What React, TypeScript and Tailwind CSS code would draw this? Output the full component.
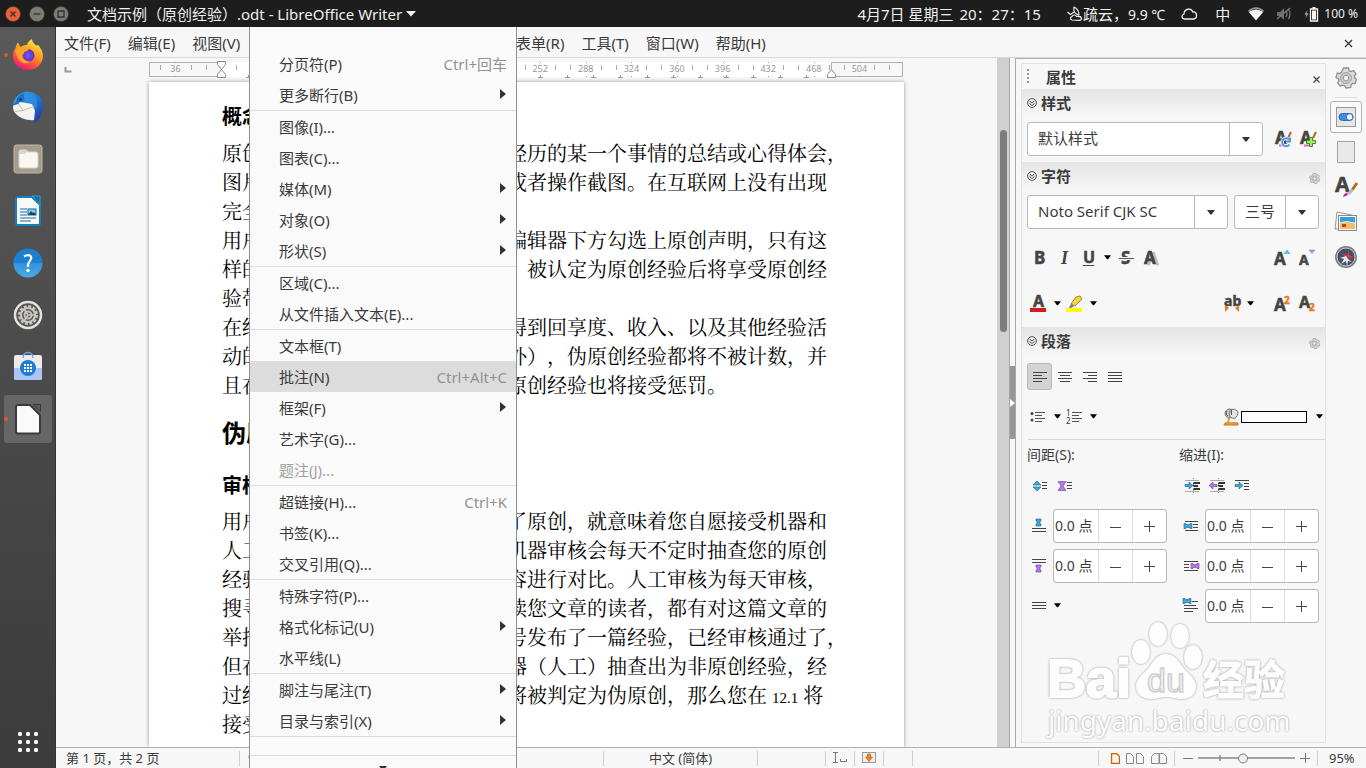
import React from 'react';
import clsx from 'clsx';

const MENUS = ['文件(F)', '编辑(E)', '视图(V)', '插入(I)', '格式(O)', '样式(Y)', '表格(A)', '表单(R)', '工具(T)', '窗口(W)', '帮助(H)'];

interface MenuEntry {
  label: string;
  shortcut?: string;
  submenu?: boolean;
  active?: boolean;
  disabled?: boolean;
}

const INSERT_MENU: MenuEntry[][] = [
  [{ label: '分页符(P)', shortcut: 'Ctrl+回车' }, { label: '更多断行(B)', submenu: true }],
  [
    { label: '图像(I)…' },
    { label: '图表(C)...' },
    { label: '媒体(M)', submenu: true },
    { label: '对象(O)', submenu: true },
    { label: '形状(S)', submenu: true },
  ],
  [{ label: '区域(C)...' }, { label: '从文件插入文本(E)...' }],
  [
    { label: '文本框(T)' },
    { label: '批注(N)', shortcut: 'Ctrl+Alt+C', active: true },
    { label: '框架(F)', submenu: true },
    { label: '艺术字(G)...' },
    { label: '题注(J)...', disabled: true },
  ],
  [{ label: '超链接(H)...', shortcut: 'Ctrl+K' }, { label: '书签(K)...' }, { label: '交叉引用(Q)...' }],
  [{ label: '特殊字符(P)...' }, { label: '格式化标记(U)', submenu: true }, { label: '水平线(L)' }],
  [{ label: '脚注与尾注(T)', submenu: true }, { label: '目录与索引(X)', submenu: true }],
];

interface Line {
  start: string;
  rest?: React.ReactNode;
}

// each line: its start, then what follows the open menu
const FIRST_LINES: Line[] = [
  { start: '原创', rest: '经历的某一个事情的总结或心得体会，' },
  { start: '图片', rest: '或者操作截图。在互联网上没有出现' },
  { start: '完全' },
  { start: '用户', rest: '编辑器下方勾选上原创声明，只有这' },
  { start: '样的', rest: '，被认定为原创经验后将享受原创经' },
  { start: '验带' },
  { start: '在经', rest: '得到回享度、收入、以及其他经验活' },
  { start: '动的', rest: '外），伪原创经验都将不被计数，并' },
  { start: '且在', rest: '原创经验也将接受惩罚。' },
];

const REVIEW_LINES: Line[] = [
  { start: '用户', rest: '了原创，就意味着您自愿接受机器和' },
  { start: '人工', rest: '机器审核会每天不定时抽查您的原创' },
  { start: '经验', rest: '容进行对比。人工审核为每天审核，' },
  { start: '搜寻', rest: '读您文章的读者，都有对这篇文章的' },
  { start: '举报', rest: '号发布了一篇经验，已经审核通过了，' },
  { start: '但在', rest: '器（人工）抽查出为非原创经验，经' },
  { start: '过经', rest: <>将被判定为伪原创，那么您在<span className="text-[15px] mx-[5px]">12.1</span>将</> },
  { start: '接受' },
];

const Caret = ({ className = '' }: { className?: string }) => (
  <svg width="8" height="5" viewBox="0 0 8 5" className={clsx('shrink-0', className)}>
    <path d="M0 0h8L4.600 4.500h-1.200z" fill="currentColor" />
  </svg>
);

/* ---------- top bar ---------- */

const WindowButton = ({ label, tone, children }: { label: string; tone: string; children: React.ReactNode }) => (
  <button aria-label={label} className="w-4 h-4 shrink-0">
    <svg width="16" height="16" viewBox="0 0 16 16">
      <circle cx="8" cy="8" r="7.500" fill={tone} stroke="#3c3b37" strokeWidth="0.600" />
      <g stroke="#33312c" strokeWidth="1.300" fill="none">{children}</g>
    </svg>
  </button>
);

const TopBar = () => (
  <header className="h-[27px] shrink-0 flex items-center bg-[#1d1d1d] text-[#f0efec] text-[15px] leading-5 pl-[5px] pr-2 whitespace-nowrap">
    <div className="flex gap-2">
      <WindowButton label="关闭" tone="#ea6038"><path d="M5.500 5.500l5 5M10.500 5.500l-5 5" /></WindowButton>
      <WindowButton label="最小化" tone="#7d7b73"><path d="M4.500 8h7" /></WindowButton>
      <WindowButton label="还原" tone="#7d7b73"><path d="M5 5h6v6h-6z" /></WindowButton>
    </div>
    <h1 className="ml-[18px] pt-px">文档示例（原创经验）.odt - LibreOffice Writer</h1>
    <svg width="10" height="6" viewBox="0 0 10 6" className="ml-1"><path d="M0 0h10L5 5.500z" fill="#f4f4f4" /></svg>
    <div className="ml-auto flex items-center">
      <span className="pt-px">4月7日 星期三</span>
      <span className="ml-[6px] pt-px">20：27：15</span>
      <svg width="16" height="16" viewBox="0 0 16 16" className="ml-[26px]" fill="none" stroke="#f0f0f0" strokeWidth="1.200">
        <path d="M7 1c-1 4 1 7 5 8M7 1c4 2 5 5 5 8" />
        <path d="M0.500 6l3 2.500L7 6" />
        <path d="M5 14c-2-.5-2-3 0-3.500 1-2 3.500-2 4.500 0 2-.5 4.500 0 5 2 0 1.500-1 1.800-2.500 1.800z" />
      </svg>
      <span className="pt-px">疏云，<span className="text-[14px]">9.9 ℃</span></span>
      <svg width="17" height="12" viewBox="0 0 17 12" className="ml-4" fill="none" stroke="#f0f0f0" strokeWidth="1.300">
        <path d="M4 11C.5 11 0 7 3 6c0-5 7-7 9-2 4-.5 5 6 1 7z" />
      </svg>
      <span className="ml-[17px] pt-px">中</span>
      <svg width="16" height="14" viewBox="0 0 16 14" className="ml-[18px]">
        <path d="M0.500 4.500C5-.2 11-.2 15.500 4.500" fill="none" stroke="#999" strokeWidth="1.600" />
        <path d="M1 5.200C5.500 1.500 10.500 1.500 15 5.200L8 13.500z" fill="#f7f7f7" />
      </svg>
      <svg width="16" height="14" viewBox="0 0 16 14" className="ml-3" stroke="#7d7d7d">
        <path d="M1 5h3l4-4v12l-4-4h-3z" fill="#6b6b6b" stroke="none" />
        <path d="M10 4q2 3 0 6M12.500 2q3 5 0 10M1 12L14 1" fill="none" strokeWidth="1.200" />
      </svg>
      <svg width="15" height="16" viewBox="0 0 15 16" className="ml-3">
        <path d="M3.500 4L0.500 8.500h2L1.500 12l3-4.500h-2z" fill="#bbb" />
        <path d="M8.500 1h3v2h-3z" fill="#f7f7f7" />
        <path d="M6.500 3h7v12h-7z" fill="none" stroke="#f7f7f7" strokeWidth="1.300" />
        <path d="M8 4.500h4v9H8z" fill="#f7f7f7" />
      </svg>
      <span className="ml-[5px] text-[12px]">100 %</span>
    </div>
  </header>
);

/* ---------- dock ---------- */

const DockItem = ({ label, running, active, children }: { label: string; running?: boolean; active?: boolean; children: React.ReactNode }) => (
  <button
    aria-label={label}
    className={clsx('relative w-12 h-12 shrink-0 rounded-[3px] flex items-center justify-center', active && 'bg-[#666]')}
  >
    {running && <span className="absolute left-0 top-[22px] w-1 h-1 rounded-full bg-[#e95420]" />}
    <svg width="32" height="32" viewBox="0 0 32 32">{children}</svg>
  </button>
);

const Dock = () => (
  <nav className="w-14 shrink-0 flex flex-col items-center gap-1 pt-1 pb-[10px] bg-gradient-to-b from-[#595959] to-[#3b3b3b] border-r border-[#333]">
    <svg width="0" height="0" className="absolute">
      <defs>
        <linearGradient id="ff" x1="0.8" y1="0" x2="0.300" y2="1">
          <stop offset="0" stopColor="#fff14f" /><stop offset="0.450" stopColor="#ff9a1c" /><stop offset="0.800" stopColor="#ff3e4d" /><stop offset="1" stopColor="#e31587" />
        </linearGradient>
        <radialGradient id="ffCore"><stop offset="0" stopColor="#7b5bff" /><stop offset="1" stopColor="#5b2bb5" /></radialGradient>
        <linearGradient id="tb" x1="0" y1="0" x2="1" y2="1"><stop offset="0" stopColor="#2db8f0" /><stop offset="0.500" stopColor="#1d7ad8" /><stop offset="1" stopColor="#2c2a8f" /></linearGradient>
        <linearGradient id="help" x1="0" y1="0" x2="0" y2="1"><stop offset="0.500" stopColor="#1d7fd0" /><stop offset="0.520" stopColor="#3595dd" /><stop offset="1" stopColor="#4ca9e6" /></linearGradient>
      </defs>
    </svg>
    <DockItem label="Firefox" running>
      <path d="M6 3.500l2.500 4.500c2-1.500 4.500-2 6.500-2 .5-3 2.500-4.500 5-6 0 3 2 4.500 4 6.500l2-.5C29 9 31 13 31 17c0 8-7 14-15 14S1 25 1 17c0-4 1.500-7 3-9 0-2 1-3.500 2-4.500z" fill="url(#ff)" />
      <circle cx="16" cy="16.500" r="6.500" fill="url(#ffCore)" />
      <path d="M3 12c3-4 7-4 9-3l5 1c-.5 2-3 2.500-4.500 3-1 1-.5 2-2 3 0 5 5 7 8 6-3 4-11 3-13-4z" fill="#ffa426" />
    </DockItem>
    <DockItem label="Thunderbird">
      <path d="M3 8C8 0 18-1 24 3c8 4 9 13 5 20l-1 4-3 3-3 2 1-3c-9 2-18-2-21-10-1-4-1-8 1-11z" fill="url(#tb)" />
      <path d="M9 12C9 6 12 2 17 2c6 1 9 6 8 13l-3 5c0-5-5-9-13-8z" fill="#2f8fe0" opacity="0.800" />
      <path d="M1 15c0 4 1 6 3 8 4 4 12 7 18 6l1-9-3-7-12-2z" fill="#f4f3ec" />
      <path d="M6 12l5 7.500 11-4M11 19.500l-8 1" fill="none" stroke="#b9b8ac" strokeWidth="0.900" />
      <path d="M4 12c0-6 4-9 9-10-2 3-1 5 0 8z" fill="#1f6ec4" />
      <circle cx="8.500" cy="8.500" r="1.200" fill="#102a52" /><path d="M1 14l4-4 2 3z" fill="#2c6fc0" />
    </DockItem>
    <DockItem label="文件">
      <rect x="2" y="2" width="28" height="28" rx="2.500" fill="#a59c8a" stroke="#bfb7a7" />
      <path d="M7 9q0-2 2-2h5q1 0 2 2h8q2 0 2 2v12q0 2-2 2H9q-2 0-2-2z" fill="#f8f7f4" stroke="#d9d3c8" />
      <path d="M7 11V9q0-2 2-2h5q1 0 2 2-2 0-3 2z" fill="#dbd5c9" />
    </DockItem>
    <DockItem label="LibreOffice Writer">
      <path d="M6 2h14l8 8v18q0 2-2 2H6q-2 0-2-2V4q0-2 2-2z" fill="#f9f9f9" stroke="#1481bd" strokeWidth="2" />
      <path d="M20 1h8v9z" fill="#1a6a9b" stroke="#26a6dc" />
      <path d="M8 14h7M8 17h7M8 20h7M8 23h16M8 26h11" stroke="#1270ab" strokeWidth="1.200" />
      <rect x="16" y="14" width="8" height="6" fill="#90c8ea" stroke="#13659a" /><path d="M16 20l3-4 2 2 1-1 2 3z" fill="#17455f" />
    </DockItem>
    <DockItem label="帮助">
      <circle cx="16" cy="16" r="14.500" fill="url(#help)" />
      <path d="M12 9.500q4-2.500 6.500-.5c3 3.500-2.500 5-2.500 9v2" fill="none" stroke="#fff" strokeWidth="2.200" />
      <circle cx="16" cy="23.500" r="1.700" fill="#fff" />
    </DockItem>
    <DockItem label="设置">
      <circle cx="16" cy="16" r="13" fill="#565654" stroke="#e4e2de" strokeWidth="2.500" />
      <circle cx="16" cy="16" r="8.700" fill="none" stroke="#c9c7c2" strokeWidth="2.500" strokeDasharray="3 1.555" />
      <circle cx="16" cy="16" r="7" fill="none" stroke="#c9c7c2" strokeWidth="2" />
      <circle cx="16" cy="16" r="3.500" fill="none" stroke="#c9c7c2" strokeWidth="2" />
      <path d="M16 16h6M16 16l-4-6M16 16l-4 6" stroke="#c9c7c2" strokeWidth="1.600" />
    </DockItem>
    <DockItem label="Ubuntu 软件">
      <rect x="2" y="4" width="28" height="25" rx="2" fill="#eceaea" /><path d="M2 17h28v10q0 2-2 2H4q-2 0-2-2z" fill="#aec3f6" />
      <path d="M11 7c0-7.500 10-7.500 10 0" fill="none" stroke="#7b9ce8" strokeWidth="1.500" />
      <circle cx="16" cy="17" r="8" fill="#1a7fd4" />
      <path d="M12 13h2v2h-2zM15 13h2v2h-2zM18 13h2v2h-2zM12 16h2v2h-2zM15 16h2v2h-2zM18 16h2v2h-2zM12 19h2v2h-2zM15 19h2v2h-2zM18 19h2v2h-2z" fill="#fff" />
    </DockItem>
    <DockItem label="LibreOffice" running active>
      <path d="M6 2h12l10 10v17q0 1.500-2 1.500H6q-2 0-2-2V4q0-2 2-2z" fill="#fafafa" stroke="#3a3a3a" strokeWidth="2" />
      <path d="M21 1.500h7.500v7z" fill="#5a5a5a" stroke="#3a3a3a" />
    </DockItem>
    <button aria-label="显示应用程序" className="mt-auto w-12 h-8 flex items-center justify-center">
      <svg width="22" height="22" viewBox="0 0 22 22" fill="#f2f2f2">
        {[3, 11, 19].map(y => [3, 11, 19].map(x => <rect key={`${x}-${y}`} x={x - 2} y={y - 2} width="4" height="4" rx="1.200" />))}
      </svg>
    </button>
  </nav>
);

/* ---------- document area ---------- */

const ZERO = 72;
const Ruler = () => (
  <div className="flex h-6 shrink-0">
    <svg width="10" height="24" viewBox="0 0 10 24" className="absolute ml-2"><path d="M1.500 9v4.500h6" fill="none" stroke="#999" strokeWidth="2" /></svg>
    <svg width="755" height="24" viewBox="0 0 755 24" className="mx-auto">
      <rect x={ZERO} y="4" width="611" height="15" fill="#fff" />
      <path d="M72.500 4.500H.5v14h72M682.500 4.500h71v14h-71z" fill="none" stroke="#b0b0b0" />
      {Array.from({ length: 17 }, (_, i) => i - 1).map(i => {
        const x = ZERO + i * 45.6;
        return (
          <g key={i}>
            {i !== 0 && i < 15 && <text x={x} y="14" fontSize="9" textAnchor="middle" fill="#999">{Math.abs(i) * 36}</text>}
            {i > -1 && i < 14 && <path d={`M${Math.round(x + 15)}.5 7v5M${Math.round(x + 30)}.5 7v5`} stroke="#aaa" />}
            {i < 15 && <path d={`M${Math.round(x)} 18.500h1M${Math.round(x)} 4.500h1`} stroke="#999" />}
          </g>
        );
      })}
      <path d="M11.500 7v5M42.500 7v5M57.500 7v5M695.500 7v5M725.500 7v5M740.500 7v5" stroke="#aaa" />
      {Array.from({ length: 22 }, (_, i) => ZERO + Math.round((i + 1) * 26.6)).map(x => (
        <path key={x} d={`M${x - 2} 19.500h5M${x}.5 17v3`} stroke="#999" fill="none" />
      ))}
      <path d="M68.500 3.500h8v3l-4 5-4-5zM68.500 19.500h8v-3l-4-5-4 5z" fill="#fff" stroke="#888" />
      <path d="M678.500 19.500h8v-3l-4-5-4 5z" fill="#fff" stroke="#888" />
    </svg>
  </div>
);

const Lines = ({ lines }: { lines: Line[] }) => (
  <div
    className="text-xl leading-[29px] [text-spacing-trim:space-all]"
    style={{ fontFamily: '"Liberation Serif", "Noto Serif CJK SC", "Noto Sans CJK SC", serif' }}
  >
    {lines.map(({ start, rest }) => (
      <p key={start} className="grid grid-cols-[285px_1fr] h-[29px] whitespace-nowrap">
        <span>{start}</span>
        <span>{rest}</span>
      </p>
    ))}
  </div>
);

const DocumentArea = () => (
  <div className="flex-1 min-w-0 flex flex-col overflow-hidden">
    <Ruler />
    <article className="w-[755px] flex-1 min-h-0 mx-auto bg-white text-black pl-[73px] pt-5 overflow-hidden shadow-[0_0_4px_#999]">
      <h3 className="text-xl leading-[30px] font-bold">概念</h3>
      <div className="mt-2"><Lines lines={FIRST_LINES} /></div>
      <h2 className="mt-[15px] text-[24px] leading-[34px] font-bold">伪原</h2>
      <h3 className="mt-[21px] text-xl leading-[30px] font-bold">审核</h3>
      <div className="mt-[7px]"><Lines lines={REVIEW_LINES} /></div>
    </article>
  </div>
);

const InsertMenu = () => (
  <div role="menu" className="absolute z-10 left-[249px] top-[27px] bottom-0 w-[268px] overflow-hidden pt-[21px] bg-[#fafafa] border-x border-[#909090] text-[15px]">
    {INSERT_MENU.map((group, i) => (
      <div key={i} className="border-b border-[#dcdcdc]">
        {group.map(item => (
          <button
            key={item.label}
            role="menuitem"
            disabled={item.disabled}
            className={clsx(
              'w-full h-[31px] pl-[29px] pr-[9px] flex items-center justify-between whitespace-nowrap',
              item.active && 'bg-[#dcdcdc]',
              item.disabled ? 'text-[#a0a0a0]' : 'text-[#3b3b3b]',
            )}
          >
            <span className="pt-[2px]">{item.label}</span>
            {item.shortcut && <span className="pt-[2px] text-[#929292]">{item.shortcut}</span>}
            {item.submenu && (
              <svg width="8" height="12" viewBox="0 0 8 12"><path d="M1 0v10l6-5z" fill="#333" /></svg>
            )}
          </button>
        ))}
      </div>
    ))}
    <div className="h-[19px] border-b border-[#dcdcdc]" />
    <Caret className="mx-auto mt-[10px] text-[#333]" />
  </div>
);

/* ---------- sidebar ---------- */

const Gear = ({ size }: { size: number }) => (
  <svg width={size} height={size} viewBox="0 0 22 22">
    <path d="M8.500 1h5l.6 2.700 2 .8 2.300-1 2.600 3.400-1.500 2 .3 2.200 1.700 1.400-1.500 4-2.500-.2-1.500 1.500-.3 2.700-4.700.5-1.200-2.200-2.200-.6-2.300 1-2.600-3.400 1.200-2-.2-2L1 10.400l1.200-4.200 2.600.3 1.700-1.300z" fill="#dcdcdc" stroke="#8f8f8f" strokeWidth="1.300" />
    <circle cx="11" cy="11" r="5.500" fill="#c6c6c6" stroke="#a3a3a3" />
    <circle cx="11" cy="11" r="2.700" fill="#f7f7f7" stroke="#999" />
  </svg>
);

const SectionHeader = ({ title, options }: { title: string; options?: boolean }) => (
  <div className="h-7 px-[5px] flex items-center bg-gradient-to-b from-[#e4e4e4] to-[#f7f7f7]">
    <svg width="10" height="10" viewBox="0 0 10 10" fill="none" stroke="#555">
      <circle cx="5" cy="5" r="4.400" /><path d="M2.500 3l2.500 2 2.500-2M2.500 5.500l2.500 2 2.500-2" />
    </svg>
    <h3 className="ml-1 text-[15px] leading-5 font-bold text-[#3b3b3b]">{title}</h3>
    {options && <button aria-label="更多选项" className="ml-auto mt-[5px]"><Gear size={11} /></button>}
  </div>
);

const Combo = ({ label, value, className }: { label: string; value: string; className: string }) => (
  <div className={clsx('grid h-[34px] rounded-[3px] border border-[#b8b8b8] bg-white', className)}>
    <select aria-label={label} className="col-start-1 row-start-1 appearance-none w-full pl-[10px] pb-[2px] text-[15px] text-[#3b3b3b] outline-none">
      <option>{value}</option>
    </select>
    <span className="col-start-1 row-start-1 justify-self-end w-[33px] border-l border-[#b8b8b8] flex items-center justify-center pointer-events-none text-[#333]">
      <Caret />
    </span>
  </div>
);

const Tool = ({ label, active, className = '', children }: { label: string; active?: boolean; className?: string; children: React.ReactNode }) => (
  <button
    aria-label={label}
    className={clsx('w-[25px] h-[27px] shrink-0 flex items-center justify-center rounded-[3px]', active && 'bg-[#d3d3d3] border border-[#b8b8b8]', className)}
  >
    <svg width="18" height="18" viewBox="0 0 18 18" className="overflow-visible">{children}</svg>
  </button>
);

const Drop = ({ label }: { label: string }) => (
  <button aria-label={label} className="w-[11px] h-[27px] shrink-0 flex items-center justify-center text-black"><Caret className="w-[7px]" /></button>
);

// letter used inside the character tools
const Glyph = ({ x = 3, y = 15, size = 17, fill = '#444', className, children }: { x?: number; y?: number; size?: number; fill?: string; className?: string; children: string }) => (
  <text x={x} y={y} fontSize={size} fontWeight="700" fill={fill} stroke={fill} strokeWidth="0.500" className={className} fontFamily="Noto Sans, sans-serif">{children}</text>
);

const Spin = ({ label, icon }: { label: string; icon: React.ReactNode }) => (
  <div className="flex items-center">
    <svg width="24" height="18" viewBox="0 0 24 18" className="mr-[2px]">{icon}</svg>
    <div className="h-[34px] w-[114px] flex rounded-[3px] border border-[#b8b8b8] bg-white text-[#3b3b3b]">
      <input aria-label={label} defaultValue="0.0 点" className="w-11 pl-px text-[14px] outline-none" />
      <button aria-label="减少" className="flex-1 border-l border-[#dcdcdc] flex items-center justify-center">
        <svg width="11" height="11" viewBox="0 0 11 11"><path d="M0 6.500h11" stroke="#444" /></svg>
      </button>
      <button aria-label="增加" className="flex-1 border-l border-[#dcdcdc] flex items-center justify-center">
        <svg width="11" height="12" viewBox="0 0 11 12"><path d="M0 6.500h11M5.500 1v11" stroke="#444" /></svg>
      </button>
    </div>
  </div>
);

const BLUE_BAR = { fill: '#42a5dc', stroke: '#27709c', strokeWidth: 0.7 };
const PURPLE_BAR = { fill: '#b07ae0', stroke: '#8247b5', strokeWidth: 0.7 };

const StyleSection = () => (
  <section className="h-[73px]">
    <SectionHeader title="样式" />
    <div className="flex items-center pl-[5px] pt-[5px]">
      <Combo label="段落样式" value="默认样式" className="w-[236px]" />
      <Tool label="更新样式" className="ml-[7px]">
        <path d="M17 2l-3 6" stroke="#b5651d" strokeWidth="2" /><path d="M5 15.500h5" stroke="#e95bd8" strokeWidth="2" />
        <Glyph x={1} y={14}>A</Glyph>
        <path d="M15 9.500a4 4 0 1 0 .5 5M16 7.500v4h-4" fill="none" stroke="#f7f7f7" strokeWidth="3.500" />
        <path d="M15 9.500a4 4 0 1 0 .5 5M16 7.500v4h-4" fill="none" stroke="#5b93dc" strokeWidth="2" />
      </Tool>
      <Tool label="新建样式">
        <path d="M17 2l-3 6" stroke="#b5651d" strokeWidth="2" /><path d="M5 15.500h5" stroke="#e95bd8" strokeWidth="2" />
        <Glyph x={1} y={14}>A</Glyph>
        <path d="M10.500 7.500h3v3h3v3h-3v3h-3v-3h-3v-3h3z" fill="#9be86a" stroke="#3f9218" />
      </Tool>
    </div>
  </section>
);

const CharacterSection = () => (
  <section className="h-[165px]">
    <SectionHeader title="字符" options />
    <div className="flex gap-[6px] pl-[5px] pt-[5px]">
      <Combo label="字体名称" value="Noto Serif CJK SC" className="w-[201px]" />
      <Combo label="字号" value="三号" className="w-[85px]" />
    </div>
    <div className="mt-[15px] flex items-center pl-[5px] pr-[6px]">
      <Tool label="粗体"><Glyph>B</Glyph></Tool>
      <Tool label="斜体"><text x="5" y="15" fontSize="18" fontWeight="700" fontStyle="italic" fill="#444" fontFamily="Liberation Serif, serif">I</text></Tool>
      <Tool label="下划线"><Glyph x={2} y={14} size={16}>U</Glyph><path d="M2 16.500h11" stroke="#444" /></Tool>
      <Drop label="下划线样式" />
      <Tool label="删除线" className="ml-px"><Glyph x={3}>S</Glyph><path d="M1 9.500h15" stroke="#f7f7f7" strokeWidth="3" /><path d="M1 9.500h15" stroke="#555" /></Tool>
      <Tool label="阴影"><Glyph x={1} className="drop-shadow-[3px_1px_0_#bdbdbd]">A</Glyph></Tool>
      <Tool label="增大字号" className="ml-auto"><Glyph x={1} y={16}>A</Glyph><path d="M11 4.500l3-3.500 3 3.500z" fill="#71b8ec" stroke="#4f9ad6" strokeWidth="0.500" /></Tool>
      <Tool label="减小字号"><Glyph x={1} y={16} size={14}>A</Glyph><path d="M11 1l3 3.500 3-3.500z" fill="#bd8de8" stroke="#9d63d0" strokeWidth="0.500" /></Tool>
    </div>
    <div className="mt-[19px] flex items-center pl-[5px] pr-[6px]">
      <Tool label="字体颜色"><Glyph x={2} y={12} size={16}>A</Glyph><path d="M-1 13h16v4H-1z" fill="#d01c1c" /></Tool>
      <Drop label="选择字体颜色" />
      <Tool label="突出显示">
        <path d="M9 2l4-1 2 3-7 7-4-2z" fill="#f2d544" stroke="#a88412" /><path d="M4 9l3 2-3 2H2z" fill="#777" />
        <path d="M-1 13h16v4H-1z" fill="#ffff00" />
      </Tool>
      <Drop label="选择突出显示颜色" />
      <Tool label="字符间距" className="ml-auto"><Glyph x={0} y={11} size={14}>ab</Glyph><path d="M1 10l4 3-4 4zM15 10l-4 3 4 4z" fill="#e87e1c" /></Tool>
      <Drop label="间距选项" />
      <Tool label="上标" className="ml-[13px]"><Glyph x={1} y={16}>A</Glyph><Glyph x={11} y={9} size={10} fill="#e87a14">2</Glyph></Tool>
      <Tool label="下标"><Glyph x={1} y={13} size={16}>A</Glyph><Glyph x={11} y={16} size={10} fill="#e87a14">2</Glyph></Tool>
    </div>
  </section>
);

const ParagraphSection = () => (
  <section>
    <SectionHeader title="段落" options />
    <div className="mt-2 pl-[5px] flex" role="group" aria-label="对齐">
      <Tool label="左对齐" active><path d="M2 4.500h14M2 7.500h9M2 10.500h14M2 13.500h9" stroke="#444" /></Tool>
      <Tool label="居中"><path d="M2 4.500h14M4 7.500h10M2 10.500h14M4 13.500h10" stroke="#444" /></Tool>
      <Tool label="右对齐"><path d="M2 4.500h14M7 7.500h9M2 10.500h14M7 13.500h9" stroke="#444" /></Tool>
      <Tool label="两端对齐"><path d="M2 4.500h14M2 7.500h14M2 10.500h14M2 13.500h14" stroke="#444" /></Tool>
    </div>
    <div className="mt-[13px] pl-[5px] flex items-center">
      <Tool label="项目符号">
        <path d="M4 4.500h10M4 7.500h7M4 10.500h10M4 13.500h7" stroke="#555" /><circle cx="1" cy="5.500" r="1.500" fill="#444" /><circle cx="1" cy="12" r="1.500" fill="#444" />
      </Tool>
      <Drop label="项目符号样式" />
      <Tool label="编号">
        <path d="M5 4.500h10M5 7.500h7M5 10.500h10M5 13.500h7" stroke="#555" />
        <text x="-1" y="8" fontSize="8" fill="#333">1</text><text x="-1" y="16" fontSize="8" fill="#333">2</text>
      </Tool>
      <Drop label="编号样式" />
      <button aria-label="背景颜色" className="ml-auto flex items-center">
        <svg width="18" height="18" viewBox="0 0 18 18">
          <path d="M1 17q0-2.500 4-2.500t10 .5v2z" fill="#ee9a35" stroke="#c8761c" />
          <path d="M6 10l-1 5h5" fill="none" stroke="#ee9a35" strokeWidth="2" />
          <circle cx="6.500" cy="5.500" r="4.500" fill="#c8c8c8" stroke="#777" /><path d="M7 1.500q5-1.500 8 2 .5 4-3 7-3 0-5.500-2z" fill="#e4e4e4" stroke="#777" />
          <path d="M8.500 2v5M4 3q-2 4 1 5" fill="none" stroke="#555" />
        </svg>
        <span className="w-[66px] h-3 bg-white border border-black" />
      </button>
      <span className="ml-[7px]"><Drop label="选择背景颜色" /></span>
    </div>
    <hr className="mt-[9px] ml-[6px] border-[#d8d8d8]" />
    <div className="pl-[5px] grid grid-cols-[152px_1fr] text-[14px] leading-5 text-[#3b3b3b]">
      <div>
        <h4 className="mt-[5px]">间距(S):</h4>
        <div className="mt-[7px] flex">
          <Tool label="增加段落间距"><path d="M2 8l4-4 4 4zM2 10l4 4 4-4z" {...BLUE_BAR} /><path d="M11 5.500h5M11 8.500h5M11 11.500h5" stroke="#444" /></Tool>
          <Tool label="减少段落间距"><path d="M2 4.500h8l-3 4.500 3 4.500H2L5 9z" {...PURPLE_BAR} /><path d="M11 5.500h5M11 8.500h5M11 11.500h5" stroke="#444" /></Tool>
        </div>
        <div className="mt-[10px] flex flex-col gap-[6px]">
          <Spin label="段前间距" icon={<><path d="M9 2h5v2h-1v3h1v2H9V7h1V4H9z" {...BLUE_BAR} /><path d="M5 11.500h14M5 14.500h14" stroke="#444" /></>} />
          <Spin label="段后间距" icon={<><path d="M9 8h5v2h-1v3h1v2H9v-2h1v-3H9z" {...PURPLE_BAR} /><path d="M5 2.500h14M5 5.500h14" stroke="#444" /></>} />
        </div>
        <div className="mt-[9px] flex items-center">
          <Tool label="行距"><path d="M1 5.500h14M1 8.500h14M1 11.500h14" stroke="#444" /></Tool>
          <Drop label="行距选项" />
        </div>
      </div>
      <div>
        <h4 className="mt-[5px]">缩进(I):</h4>
        <div className="mt-[7px] flex">
          <Tool label="增加缩进"><path d="M2 3.500h14M2 14.500h14" stroke="#aaa" /><path d="M2 7.500h4V5l4 3.500L6 12V9.500H2z" {...BLUE_BAR} /><path d="M10 6h7M10 9h5M10 12h7" stroke="#333" strokeWidth="2" /><path d="M10.500 1v16" stroke="#999" strokeDasharray="1 1" /></Tool>
          <Tool label="减少缩进"><path d="M2 3.500h14M2 14.500h14" stroke="#aaa" /><path d="M9 7.500H5V5L1 8.500 5 12V9.500h4z" {...PURPLE_BAR} /><path d="M10 6h7M10 9h5M10 12h7" stroke="#333" strokeWidth="2" /><path d="M10.500 1v16" stroke="#999" strokeDasharray="1 1" /></Tool>
          <Tool label="切换悬挂缩进"><path d="M2 3.500h14M11 6.500h5M11 9.500h5M11 12.500h5" stroke="#444" /><path d="M2 7.500h4V5l4 3.500L6 12V9.500H2z" {...BLUE_BAR} /></Tool>
        </div>
        <div className="mt-[10px] flex flex-col gap-[6px]">
          <Spin label="文本之前缩进" icon={<><path d="M6 4.500h13M14 7.500h5M14 10.500h5M6 13.500h13" stroke="#444" /><path d="M5 6.500h2v1h4v-1h2v5h-2v-1H7v1H5z" {...BLUE_BAR} /></>} />
          <Spin label="文本之后缩进" icon={<><path d="M5 4.500h14M5 7.500h5M5 10.500h5M5 13.500h14" stroke="#444" /><path d="M12 6.500h2v1h4v-1h2v5h-2v-1h-4v1h-2z" {...PURPLE_BAR} /></>} />
          <Spin label="首行缩进" icon={<><path d="M13 4.500h6M5 8.500h12M5 11.500h14M5 14.500h9" stroke="#444" /><path d="M4 1.500h2v1h4v-1h2v5h-2v-1H6v1H4z" {...BLUE_BAR} /></>} />
        </div>
      </div>
    </div>
  </section>
);

const Watermark = () => (
  <svg width="260" height="124" viewBox="0 0 260 124" className="absolute right-[66px] bottom-[26px] pointer-events-none">
    <g fill="#fdfdfd" stroke="#fdfdfd" strokeWidth="2" className="drop-shadow-[0_0_1px_#999]">
      <text x="7" y="79" fontSize="54" fontWeight="700" fontFamily="Liberation Sans, sans-serif">Bai</text>
      <g strokeWidth="0">
        <ellipse cx="101" cy="34" rx="9" ry="12" /><ellipse cx="118" cy="16" rx="9" ry="12" />
        <ellipse cx="140" cy="18" rx="9" ry="12" /><ellipse cx="153" cy="39" rx="9" ry="12" />
        <path d="M126 36c8 0 12 6 16 12 6 8 14 12 14 20s-6 13-14 13c-7 0-10-2-16-2s-9 2-15 2c-9 0-15-5-15-13 0-8 8-12 14-20 4-6 8-12 16-12z" />
      </g>
      <text x="163" y="77" fontSize="41" fontWeight="700" strokeWidth="1" fontFamily="Noto Sans CJK SC, sans-serif">经验</text>
      <text x="8" y="113" fontSize="28" strokeWidth="0" fontFamily="Noto Sans, sans-serif">jingyan.baidu.com</text>
    </g>
    <text x="107" y="74" fontSize="34" fontFamily="Liberation Sans, sans-serif" fill="#f4f4f4" stroke="#cfcfcf" strokeWidth="1.500">du</text>
  </svg>
);

const DeckTab = ({ label, active, children }: { label: string; active?: boolean; children: React.ReactNode }) => (
  <button aria-label={label} className={clsx('w-8 h-8 rounded-[3px] flex items-center justify-center', active && 'border border-[#b0b0b0] bg-[#fafafa]')}>
    <svg width="24" height="24" viewBox="0 0 24 24" className="shrink-0 overflow-visible">{children}</svg>
  </button>
);

const Sidebar = () => (
  <aside className="w-[350px] shrink-0 flex pl-[5px] pt-1 pb-1 border-t border-[#b0b0b0] bg-[#f7f7f7]">
    <div className="w-[305px] border border-[#e2e2e2]">
      <div className="h-[25px] flex items-center px-[5px]">
        <svg width="3" height="15" viewBox="0 0 3 15"><path d="M1 0v15" stroke="#999" strokeWidth="2" strokeDasharray="2 2" /></svg>
        <h2 className="ml-4 text-[15px] leading-5 font-bold text-[#3b3b3b]">属性</h2>
        <button aria-label="关闭侧边栏" className="ml-auto mt-[5px]">
          <svg width="7" height="7" viewBox="0 0 7 7"><path d="M.5.500l6 6M6.500.500l-6 6" stroke="#444" strokeWidth="1.200" /></svg>
        </button>
      </div>
      <StyleSection />
      <CharacterSection />
      <ParagraphSection />
    </div>
    <div className="ml-1 flex flex-col items-center">
      <button aria-label="侧边栏设置" className="mt-1"><Gear size={22} /></button>
      <hr className="w-[22px] mt-2 border-[#dcdcdc]" />
      <div className="mt-[3px] flex flex-col gap-[3px]">
        <DeckTab label="属性" active>
          <rect x="2.500" y="2.500" width="19" height="19" fill="#e6e6e6" stroke="#999" /><rect x="5" y="8.500" width="14" height="7" rx="3.500" fill="#3b8ee2" stroke="#2a6cb4" /><circle cx="15.500" cy="12" r="3.300" fill="#fff" stroke="#2a6cb4" />
        </DeckTab>
        <DeckTab label="页面"><rect x="3.500" y="1.500" width="17" height="21" fill="#e9e9e9" stroke="#a3a3a3" /></DeckTab>
        <DeckTab label="样式">
          <Glyph x={1} y={17} size={21}>A</Glyph>
          <path d="M23 8l-5 7" stroke="#b86a1d" strokeWidth="3" /><path d="M18.500 14.500l-4 4.500" stroke="#bbb" strokeWidth="3" /><path d="M9 22q1-4 4-4 3 2-4 4z" fill="#c0228f" />
        </DeckTab>
        <DeckTab label="图库">
          <path d="M3 2l15 3-3 14H1z" fill="#f3f3f3" stroke="#999" /><rect x="4.500" y="5.500" width="18" height="15" fill="#fff" stroke="#888" />
          <path d="M6 7h15v6H6z" fill="#32a0dc" /><path d="M6 13q7-3 15 0v6H6z" fill="#f0bd68" /><path d="M6 12.500q7-2 15 .5" stroke="#d9f2fb" fill="none" /><path d="M8 14h4v3H8z" fill="#d83422" />
        </DeckTab>
        <DeckTab label="导航">
          <circle cx="12" cy="12" r="10" fill="#454f68" stroke="#7f7f7f" strokeWidth="2" /><circle cx="12" cy="12" r="9" fill="none" stroke="#c9c9c9" />
          <path d="M12 12l-6-4 7 2 2-5 0 5 5 2-5 1z" fill="#e03a3a" /><path d="M12 11l2 3 4 3-4-1-1 5-1-5-5 3 3-5-4-1z" fill="#e6e6e6" />
        </DeckTab>
      </div>
    </div>
  </aside>
);

/* ---------- status bar ---------- */

const Cell = ({ className, children }: { className: string; children?: React.ReactNode }) => (
  <div className={clsx('h-[15px] flex items-center border-r border-[#d0d0d0]', className)}>{children}</div>
);

const StatusBar = () => (
  <footer className="h-[21px] shrink-0 flex items-center border-t border-[#b0b0b0] bg-[#f7f7f7] text-[13px] leading-5 text-[#3b3b3b] whitespace-nowrap">
    <Cell className="w-[184px] pl-[10px]">第 1 页，共 2 页</Cell>
    <Cell className="flex-1 pl-2">968 个字词，988 个字符</Cell>
    <Cell className="w-[154px] justify-center">中文 (简体)</Cell>
    <Cell className="w-[68px]" />
    <Cell className="w-[29px] justify-center">
      <svg width="16" height="12" viewBox="0 0 16 12" fill="none" stroke="#777"><path d="M1 .5h5M1 10.500h5M3.500 1v9M8.500 7v2.500h6V7" /></svg>
    </Cell>
    <Cell className="w-[29px] justify-center">
      <svg width="14" height="12" viewBox="0 0 14 12"><rect x=".5" y=".5" width="13" height="10" fill="#eee" stroke="#999" /><path d="M5.500 2h3v3h2L7 9.500 3.500 5h2z" fill="#f08418" stroke="#b95505" strokeWidth=".6" /></svg>
    </Cell>
    <Cell className="w-[29px]" />
    <Cell className="w-[186px]" />
    <Cell className="w-[76px] pl-3 gap-[6px]">
      <button aria-label="单页视图"><svg width="9" height="11" viewBox="0 0 9 11"><path d="M.5.500h5l3 3v7h-8z" fill="none" stroke="#d65f00" strokeWidth="1.400" /></svg></button>
      <button aria-label="多页视图"><svg width="19" height="11" viewBox="0 0 19 11"><path d="M.5.500h4l3 3v7h-7zM10.500.500h4l3 3v7h-7z" fill="none" stroke="#888" /></svg></button>
      <button aria-label="书本视图"><svg width="17" height="11" viewBox="0 0 17 11"><path d="M3.500.500h4.500v10H.5v-7zM8.500.500h4l3 3v7h-7z" fill="none" stroke="#888" /></svg></button>
    </Cell>
    <Cell className="w-[143px] justify-center gap-[5px]">
      <button aria-label="缩小"><svg width="10" height="10" viewBox="0 0 10 10"><path d="M0 5.500h10" stroke="#777" /></svg></button>
      <label className="grid items-center">
        <input type="range" aria-label="显示比例" defaultValue="46" className="col-start-1 row-start-1 w-[97px] h-3 opacity-0" />
        <svg width="97" height="12" viewBox="0 0 97 12" className="col-start-1 row-start-1 pointer-events-none">
          <path d="M0 6h97M22 3v6" stroke="#888" strokeWidth="1.500" /><circle cx="45" cy="6.500" r="4.500" fill="#f0f0f0" stroke="#777" />
        </svg>
      </label>
      <button aria-label="放大"><svg width="10" height="10" viewBox="0 0 10 10"><path d="M0 5.500h10M5.500 0v10" stroke="#777" /></svg></button>
    </Cell>
    <span className="w-12 pl-[11px]">95%</span>
  </footer>
);

export default function App() {
  return (
    <div
      className="relative h-screen flex flex-col overflow-hidden bg-[#f7f7f7] text-[#3b3b3b]"
      style={{ fontFamily: '"Noto Sans", "Noto Sans CJK SC", sans-serif' }}
    >
      <TopBar />
      <div className="flex-1 min-h-0 flex">
        <Dock />
        <div className="flex-1 min-w-0 flex flex-col">
          <div className="h-[31px] shrink-0 flex items-center gap-[17px] pl-2 pr-[13px] pt-[2px] border-b border-[#d8d8d8] text-[15px] leading-5 whitespace-nowrap">
            {MENUS.map(menu => <button key={menu}>{menu}</button>)}
            <button aria-label="关闭文档" className="ml-auto">
              <svg width="9" height="9" viewBox="0 0 9 9"><path d="M1 1l7 7M8 1L1 8" stroke="#333" strokeWidth="1.300" /></svg>
            </button>
          </div>
          <div className="flex-1 min-h-0 flex">
            <DocumentArea />
            <div className="w-3 shrink-0 bg-[#d0d0d0] flex justify-center pt-[72px]"><div className="w-[7px] h-[202px] rounded-full bg-[#7c7c7c]" /></div>
            <div className="w-[7px] shrink-0 border-x border-[#a8a8a8] flex items-center">
              <button aria-label="隐藏侧边栏" className="w-[5px] h-[73px] bg-[#979797] flex items-center">
                <svg width="5" height="8" viewBox="0 0 5 8"><path d="M0 0l5 4-5 4z" fill="#fff" /></svg>
              </button>
            </div>
            <Sidebar />
          </div>
          <StatusBar />
        </div>
      </div>
      <InsertMenu />
      <Watermark />
    </div>
  );
}
